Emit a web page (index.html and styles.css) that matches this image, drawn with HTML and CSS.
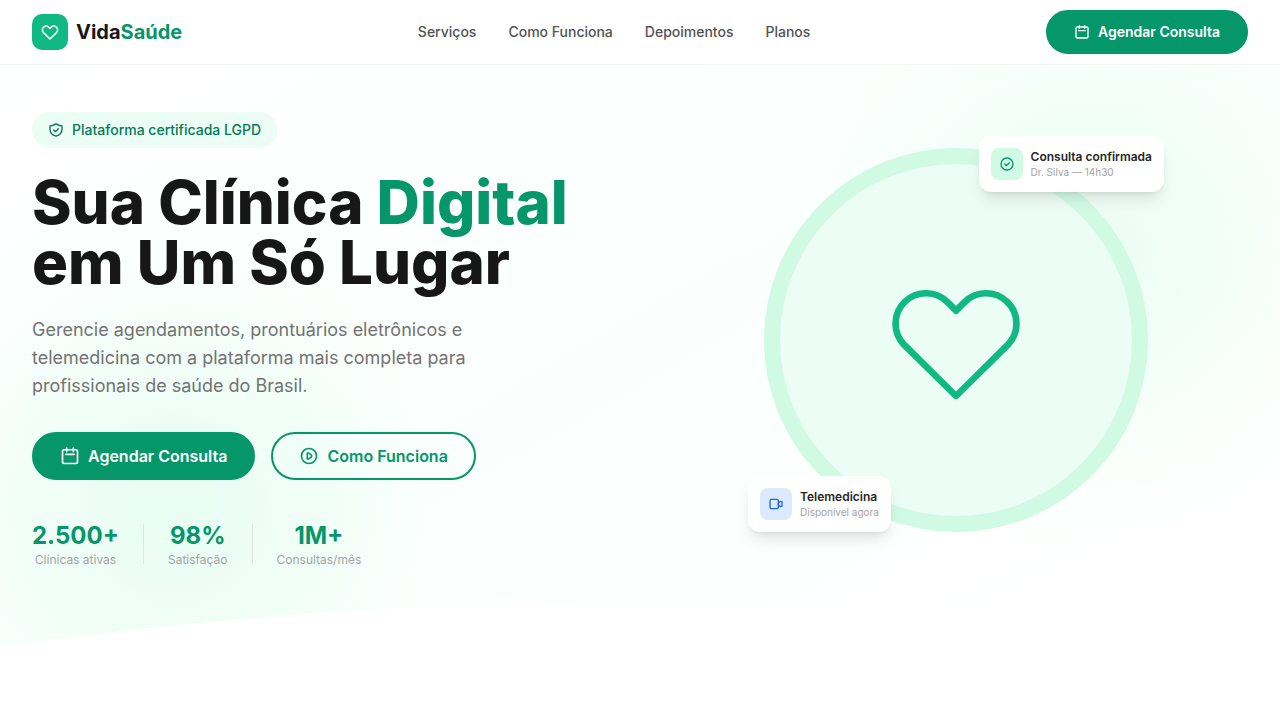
FILE: index.html
```
<!DOCTYPE html>
<html lang="pt-BR">
<head>
    <meta charset="UTF-8">
    <meta name="viewport" content="width=device-width, initial-scale=1.0">
    <title>VidaSaúde</title>
    <link rel="stylesheet" href="styles.css">
</head>
<body>
    <header class="navbar">
        <a href="#" class="logo">
            <span class="logo-icon">
                <svg class="icon icon-md" viewBox="0 0 24 24"><path d="M12 20.4 4.2 12.7A4.56 4.56 0 0 1 10.8 6.4L12 7.6l1.2-1.2a4.56 4.56 0 0 1 6.6 6.3z"/></svg>
            </span>
            <span>Vida<span class="green">Saúde</span></span>
        </a>
        <nav class="nav-links">
            <a href="#servicos">Serviços</a>
            <a href="#como-funciona">Como Funciona</a>
            <a href="#depoimentos">Depoimentos</a>
            <a href="#planos">Planos</a>
        </nav>
        <button class="btn btn-primary btn-small">
            <svg class="icon icon-sm" viewBox="0 0 24 24"><rect x="3" y="4.5" width="18" height="16.5" rx="2"/><path d="M8 2.5v4M16 2.5v4M7 10h10"/></svg>
            Agendar Consulta
        </button>
    </header>

    <main class="hero">
        <div class="hero-grid">
            <div class="hero-text">
                <div class="badge">
                    <svg class="icon icon-sm" viewBox="0 0 24 24"><path d="M12 2.8c2.6 2 5.5 2.9 9 3v5.2c0 5-3.5 8.8-9 10.3-5.5-1.5-9-5.3-9-10.3V5.8c3.5-.1 6.4-1 9-3z"/><path d="m8.5 12 2.5 2.5 4.5-4.5"/></svg>
                    Plataforma certificada LGPD
                </div>
                <h1>Sua Clínica <span class="green">Digital</span><br>em Um Só Lugar</h1>
                <p class="lead">Gerencie agendamentos, prontuários eletrônicos e telemedicina com a plataforma mais completa para profissionais de saúde do Brasil.</p>
                <div class="actions">
                    <button class="btn btn-primary">
                        <svg class="icon icon-md" viewBox="0 0 24 24"><rect x="3" y="4.5" width="18" height="16.5" rx="2"/><path d="M8 2.5v4M16 2.5v4M7 10h10"/></svg>
                        Agendar Consulta
                    </button>
                    <button class="btn btn-outline">
                        <svg class="icon icon-md" viewBox="0 0 24 24"><circle cx="12" cy="12" r="9"/><path d="M10 9v6.5h1.5l3.5-2.5v-2l-3.5-2.5H10z"/></svg>
                        Como Funciona
                    </button>
                </div>
                <div class="stats">
                    <div class="stat">
                        <div class="stat-number">2.500+</div>
                        <div class="stat-label">Clínicas ativas</div>
                    </div>
                    <div class="divider"></div>
                    <div class="stat">
                        <div class="stat-number">98%</div>
                        <div class="stat-label">Satisfação</div>
                    </div>
                    <div class="divider"></div>
                    <div class="stat">
                        <div class="stat-number">1M+</div>
                        <div class="stat-label">Consultas/mês</div>
                    </div>
                </div>
            </div>

            <div class="hero-visual">
                <div class="circle">
                    <svg class="icon heart" viewBox="0 0 24 24"><path d="M12 20.4 4.2 12.7A4.56 4.56 0 0 1 10.8 6.4L12 7.6l1.2-1.2a4.56 4.56 0 0 1 6.6 6.3z"/></svg>
                </div>
                <div class="card card-top">
                    <div class="card-icon">
                        <svg class="icon icon-sm" viewBox="0 0 24 24"><circle cx="12" cy="12" r="9"/><path d="m8.5 12 2.5 2.5 4.5-4.5"/></svg>
                    </div>
                    <div>
                        <div class="card-title">Consulta confirmada</div>
                        <div class="card-sub">Dr. Silva — 14h30</div>
                    </div>
                </div>
                <div class="card card-bottom">
                    <div class="card-icon blue">
                        <svg class="icon icon-sm" viewBox="0 0 24 24"><rect x="3" y="5" width="12.5" height="14" rx="2"/><path d="M15.5 10.5 18 8.5h3v7h-3l-2.5-2z"/></svg>
                    </div>
                    <div>
                        <div class="card-title">Telemedicina</div>
                        <div class="card-sub">Disponível agora</div>
                    </div>
                </div>
            </div>
        </div>
        <svg class="wave" viewBox="0 0 1280 45" preserveAspectRatio="none"><path d="M0 44C213 12 430 0 640 0s427 12 640 44v1H0z"/></svg>
    </main>
</body>
</html>
```

FILE: styles.css
```
* {
    box-sizing: border-box;
}
body {
    margin: 0;
    font-family: Inter, "Liberation Sans", sans-serif;
    color: #171717;
    background-color: #fff;
}
h1, p {
    margin: 0;
}
.green {
    color: #059669;
}
.icon {
    flex-shrink: 0;
    fill: none;
    stroke: currentColor;
    stroke-width: 2;
    stroke-linecap: round;
    stroke-linejoin: round;
}
.icon-sm {
    width: 16px;
    height: 16px;
}
.icon-md {
    width: 20px;
    height: 20px;
}

/* Navbar */
.navbar {
    display: flex;
    align-items: center;
    justify-content: space-between;
    height: 65px;
    padding: 0 32px;
    border-bottom: 1px solid #f3f4f4;
}
.logo {
    display: flex;
    align-items: center;
    gap: 8px;
    font-size: 20px;
    font-weight: 700;
    line-height: 28px;
    color: #171717;
    text-decoration: none;
}
.logo-icon {
    display: flex;
    align-items: center;
    justify-content: center;
    width: 36px;
    height: 36px;
    border-radius: 10px;
    color: #ecfdf5;
    background-color: #10b981;
}
.nav-links {
    display: flex;
    gap: 32px;
}
.nav-links a {
    font-size: 14px;
    font-weight: 500;
    line-height: 20px;
    color: #525252;
    text-decoration: none;
}
.nav-links a:hover {
    color: #059669;
}

/* Buttons */
.btn {
    display: flex;
    align-items: center;
    justify-content: center;
    gap: 8px;
    height: 48px;
    padding: 0 26px;
    border: 2px solid #059669;
    border-radius: 24px;
    font-family: inherit;
    font-size: 16px;
    font-weight: 600;
    line-height: 24px;
    cursor: pointer;
}
.btn-small {
    height: 44px;
    font-size: 14px;
    line-height: 20px;
}
.btn-primary {
    background-color: #059669;
    color: #fff;
}
.btn-outline {
    background-color: transparent;
    color: #059669;
}

/* Hero */
.hero {
    position: relative;
    padding: 47px 32px 80px;
    background:
        radial-gradient(circle at 170px 435px, rgba(209, 250, 229, 0.45), rgba(209, 250, 229, 0.25) 130px, transparent 260px),
        radial-gradient(circle at calc(100% - 180px) 195px, rgba(209, 250, 229, 0.4), rgba(209, 250, 229, 0.2) 130px, transparent 290px),
        linear-gradient(150deg, #fff, #fafffd 50%, #fff 85%);
}
.hero-grid {
    display: grid;
    grid-template-columns: 1fr 1fr;
    align-items: center;
    gap: 48px;
}
.badge {
    display: inline-flex;
    align-items: center;
    gap: 8px;
    padding: 8px 16px;
    border-radius: 18px;
    background-color: #ecfdf5;
    color: #047857;
    font-size: 14px;
    font-weight: 500;
    line-height: 20px;
    vertical-align: top;
}
h1 {
    margin-top: 24px;
    font-size: 60px;
    font-weight: 800;
    line-height: 60px;
}
.lead {
    max-width: 448px;
    margin-top: 24px;
    font-size: 18px;
    line-height: 28px;
    color: #737373;
}
.actions {
    display: flex;
    gap: 16px;
    margin-top: 32px;
}
.stats {
    display: flex;
    align-items: center;
    gap: 24px;
    margin-top: 40px;
}
.stat {
    text-align: center;
}
.stat-number {
    font-size: 24px;
    font-weight: 700;
    line-height: 32px;
    color: #059669;
}
.stat-label {
    font-size: 12px;
    line-height: 16px;
    color: #a3a3a3;
}
.divider {
    width: 1px;
    height: 40px;
    background-color: #e0e5e2;
}

/* Circle and floating cards */
.hero-visual {
    position: relative;
    width: 384px;
    margin: 0 auto;
}
.circle {
    display: flex;
    align-items: center;
    justify-content: center;
    height: 384px;
    border: 16px solid #d1fae5;
    border-radius: 50%;
    background-color: #ecfdf5;
}
.heart {
    width: 160px;
    height: 160px;
    color: #10b981;
    stroke-width: 1;
}
.card {
    position: absolute;
    display: flex;
    align-items: center;
    gap: 8px;
    padding: 12px;
    border-radius: 12px;
    background-color: #fff;
    box-shadow: 0 10px 15px -3px rgba(0, 0, 0, 0.1), 0 4px 6px -4px rgba(0, 0, 0, 0.1);
    white-space: nowrap;
}
.card-top {
    top: -12px;
    right: -16px;
}
.card-bottom {
    bottom: 0;
    left: -16px;
}
.card-icon {
    display: flex;
    align-items: center;
    justify-content: center;
    width: 32px;
    height: 32px;
    border-radius: 8px;
    background-color: #d1fae5;
    color: #059669;
}
.card-icon.blue {
    background-color: #dbeafe;
    color: #2563eb;
}
.card-title {
    font-size: 12px;
    font-weight: 600;
    line-height: 16px;
    color: #262626;
}
.card-sub {
    font-size: 10px;
    line-height: 15px;
    color: #a3a3a3;
}
.wave {
    position: absolute;
    left: 0;
    bottom: 0;
    display: block;
    width: 100%;
    height: 45px;
    fill: #fff;
}
```
